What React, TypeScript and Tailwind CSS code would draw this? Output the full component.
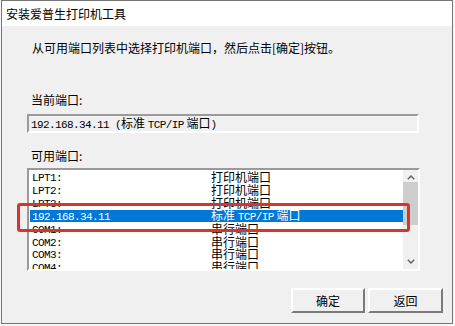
import React from "react"

const ui = "font-['Noto_Sans_CJK_SC',sans-serif]"

// latin parts of list text, narrow like the bitmap system font
function L({ children }: { children: React.ReactNode }) {
  return <span className="font-['Liberation_Mono',monospace] text-[11px] tracking-[-0.6px]">{children}</span>
}

const ports: { name: string; kind: React.ReactNode; selected?: boolean }[] = [
  { name: "LPT1:", kind: "打印机端口" },
  { name: "LPT2:", kind: "打印机端口" },
  { name: "LPT3:", kind: "打印机端口" },
  {
    name: "192.168.34.11",
    kind: (
      <>
        标准 <L>TCP/IP</L> 端口
      </>
    ),
    selected: true,
  },
  { name: "COM1:", kind: "串行端口" },
  { name: "COM2:", kind: "串行端口" },
  { name: "COM3:", kind: "串行端口" },
  { name: "COM4:", kind: "串行端口" },
]

function Chevron({ down }: { down?: boolean }) {
  return (
    <svg width="8" height="5" viewBox="0 0 8 5" className={down ? "rotate-180" : ""}>
      <path d="M0.8 4.2 L4 1 L7.2 4.2" fill="none" stroke="#606060" strokeWidth="1.4" />
    </svg>
  )
}

export default function App() {
  return (
    <div className={`min-h-screen w-[455px] h-[326px] bg-[#f6f6f6] ${ui} text-[12px] text-black`}>
      <div className="ml-[1px] w-[452px] h-[324px] border border-[#767676] bg-[#f0f0f0] flex flex-col overflow-hidden">
        <div className="h-[25px] bg-white flex items-center pl-[4px] leading-none">安装爱普生打印机工具</div>

        <div className="flex flex-col pl-[25px] pr-[9px]">
          <div className="mt-[14px] ml-[5px] leading-[16px]">从可用端口列表中选择打印机端口，然后点击[确定]按钮。</div>

          <div className="mt-[36px] ml-[4px] leading-[16px]">当前端口:</div>
          <div className="mt-[6px] w-[392px] h-[19px] border-2 border-t-[#9a9a9a] border-l-[#9a9a9a] border-b-white border-r-white flex items-center pl-[2px] leading-none">
            <span className="whitespace-pre">
              <L>192.168.34.11 (</L>标准 <L>TCP/IP</L> 端口<L>)</L>
            </span>
          </div>

          <div className="mt-[15px] ml-[4px] leading-[16px]">可用端口:</div>
          <div className="relative mt-[4px] w-[393px] h-[103px] border-2 border-t-[#9a9a9a] border-l-[#9a9a9a] border-b-white border-r-white bg-white flex">
            <div className="flex-1 flex flex-col pl-[1px] pt-[1px] overflow-hidden">
              {ports.map((p) => (
                <div
                  key={p.name}
                  className={`flex shrink-0 items-center h-[12.85px] leading-none w-[373px] ${p.selected ? "bg-[#0078d7] text-white" : ""}`}
                >
                  <div className="w-[181px] pl-[2px]">
                    <L>{p.name}</L>
                  </div>
                  <div className="whitespace-pre">{p.kind}</div>
                </div>
              ))}
            </div>
            <div className="w-[15px] bg-[#f0f0f0] flex flex-col">
              <div className="h-[12px] flex items-center justify-center pt-[2px]">
                <Chevron />
              </div>
              <div className="h-[43px] bg-[#cdcdcd]" />
              <div className="flex-1" />
              <div className="h-[14px] flex items-center justify-center pb-[2px]">
                <Chevron down />
              </div>
            </div>
            <div className="absolute left-[-12px] top-[33px] w-[393px] h-[29px] border-[3px] border-[#d9342b] rounded-[3px]" />
          </div>

          <div className="mt-[17px] flex justify-end gap-[3px]">
            <button className="w-[74px] h-[25px] border-2 border-t-white border-l-white border-b-[#7a7a7a] border-r-[#7a7a7a] bg-[#f0f0f0] leading-none">
              确定
            </button>
            <button className="w-[75px] h-[25px] border-2 border-t-white border-l-white border-b-[#7a7a7a] border-r-[#7a7a7a] bg-[#f0f0f0] leading-none">
              返回
            </button>
          </div>
        </div>
      </div>
    </div>
  )
}
